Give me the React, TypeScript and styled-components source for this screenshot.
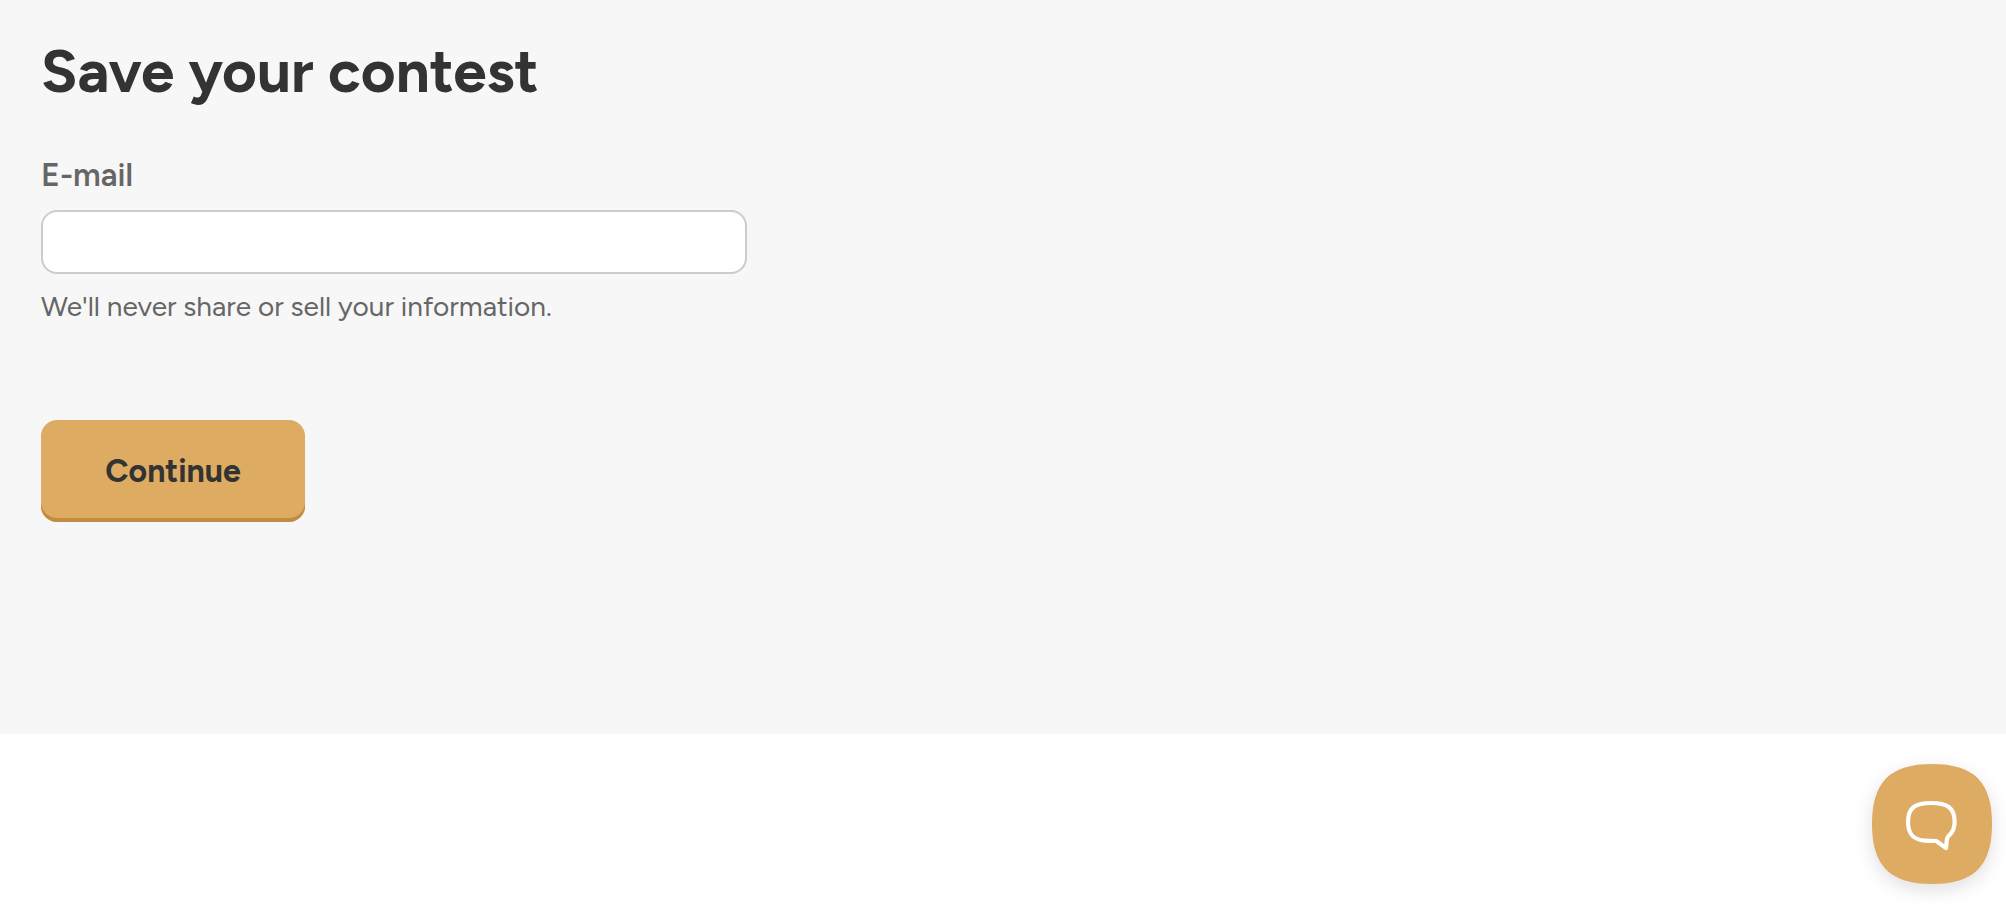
import React, { useState } from 'react';
import styled, { createGlobalStyle } from 'styled-components';

const GlobalStyle = createGlobalStyle`
  *, *::before, *::after {
    box-sizing: border-box;
  }

  body {
    margin: 0;
    background: #fff;
    color: #333;
    font-family: 'Figtree', 'Lato', sans-serif;
    overflow: hidden;
  }
`;

const ContestSection = styled.section`
  height: 734px;
  padding: 35px 41px;
  background-color: #f7f7f7;
`;

const Title = styled.h1`
  margin: 0 0 43px;
  font-size: 60px;
  font-weight: 700;
  line-height: 72px;
  white-space: nowrap;
`;

const Form = styled.form`
  display: flex;
  flex-direction: column;
  align-items: flex-start;
`;

const Label = styled.label`
  margin-bottom: 10px;
  font-size: 32px;
  font-weight: 600;
  line-height: 50px;
  color: #666;
`;

const EmailInput = styled.input`
  width: 706px;
  height: 64px;
  padding: 0 20px;
  border: 2px solid #ccc;
  border-radius: 16px;
  background-color: #fff;
  font: inherit;
  font-size: 32px;
  outline: none;
`;

const HelpText = styled.p`
  margin: 12px 0 94px;
  font-size: 28px;
  line-height: 40px;
  color: #666;
  white-space: nowrap;
`;

const SubmitButton = styled.button`
  width: 264px;
  height: 102px;
  padding: 0;
  border: none;
  border-radius: 16px;
  background-color: #deab62;
  box-shadow: inset 0 -4px 0 #c28c43;
  color: #333;
  font-family: inherit;
  font-size: 32px;
  font-weight: 700;
  cursor: pointer;
`;

const ChatButton = styled.button`
  position: fixed;
  right: 14px;
  bottom: 22px;
  width: 120px;
  height: 120px;
  padding: 0;
  border: none;
  background: none;
  filter: drop-shadow(0 6px 9px rgba(0, 0, 0, 0.12));
  cursor: pointer;

  svg {
    display: block;
  }
`;

const ChatIcon: React.FC = () => (
  <svg width="120" height="120" viewBox="0 0 120 120" fill="none">
    <path
      d="M0 60C0 18 18 0 60 0C102 0 120 18 120 60C120 102 102 120 60 120C18 120 0 102 0 60Z"
      fill="#deab62"
    />
    <path
      d="M59.3 39C43.5 39 36 43.5 36 57.8C36 71 42 75.8 53 76.6C57 76.9 60.5 77 64.3 77L74 84L74.9 75C75.2 73.2 76 72.5 77.5 71C81.5 67.5 82.6 63.5 82.6 57.8C82.6 43.5 75 39 59.3 39Z"
      stroke="#fff"
      strokeWidth="4.2"
      strokeLinejoin="round"
    />
  </svg>
);

const App: React.FC = () => {
  const [email, setEmail] = useState('');

  return (
    <>
      <GlobalStyle />
      <ContestSection>
        <Title>Save your contest</Title>
        <Form onSubmit={e => e.preventDefault()}>
          <Label htmlFor="email">E-mail</Label>
          <EmailInput
            id="email"
            type="email"
            value={email}
            onChange={e => setEmail(e.target.value)}
          />
          <HelpText>We'll never share or sell your information.</HelpText>
          <SubmitButton type="submit">Continue</SubmitButton>
        </Form>
      </ContestSection>
      <ChatButton type="button" aria-label="Open chat">
        <ChatIcon />
      </ChatButton>
    </>
  );
};

export default App;
